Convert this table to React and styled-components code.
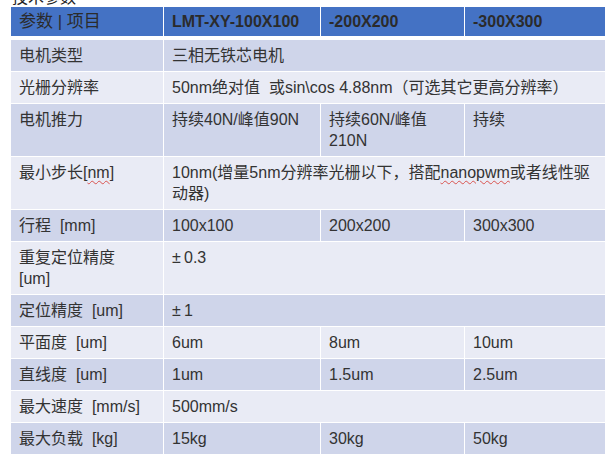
import React from "react";
import styled, { createGlobalStyle } from "styled-components";

const GlobalStyle = createGlobalStyle`
  body {
    margin: 0;
    background: #fff;
    font-family: "Liberation Sans", "Noto Sans CJK SC", sans-serif;
  }
`;

const Page = styled.div`
  padding: 0 5px 0 10px;
`;

const Caption = styled.div`
  height: 6px;
  overflow: hidden;
  display: flex;
  align-items: flex-end;
  padding-left: 2px;
  font-size: 16px;
  line-height: 17px;
  color: #222;
`;

const SpecTable = styled.table`
  width: 596px;
  border-collapse: collapse;
  table-layout: fixed;
  font-size: 16px;
  color: #333;
`;

const HeadCell = styled.th`
  background: #4472c4;
  color: #2b2b2b;
  font-weight: ${(p) => (p.$plain ? 400 : 700)};
  font-size: ${(p) => (p.$plain ? "17px" : "16px")};
  text-align: left;
  padding: 4px 8px 4px;
  line-height: 21px;
  border: 1px solid #fff;
  border-bottom: 4px solid #fff;
`;

const Row = styled.tr`
  background: ${(p) => (p.$dark ? "#cfd5ea" : "#e9ebf5")};
`;

const Cell = styled.td`
  padding: 5px 8px 5px;
  line-height: 21px;
  vertical-align: top;
  border: 1px solid #fff;
`;

const Squiggle = styled.span`
  text-decoration: underline wavy #d9534f;
  text-decoration-thickness: 1px;
  text-underline-offset: 2px;
`;

const rows = [
  ["电机类型", ["三相无铁芯电机"]],
  ["光栅分辨率", ["50nm绝对值\u00a0 或sin\\cos 4.88nm（可选其它更高分辨率）"]],
  ["电机推力", ["持续40N/峰值90N", "持续60N/峰值210N", "持续"]],
  [
    <>
      最小步长[<Squiggle>nm</Squiggle>]
    </>,
    [
      <>
        10nm(增量5nm分辨率光栅以下，搭配<Squiggle>nanopwm</Squiggle>或者线性驱动器)
      </>,
    ],
  ],
  ["行程\u00a0 [mm]", ["100x100", "200x200", "300x300"]],
  [
    <>
      重复定位精度
      <br />
      [um]
    </>,
    ["±\u20090.3"],
  ],
  ["定位精度\u00a0 [um]", ["±\u20091"]],
  ["平面度\u00a0 [um]", ["6um", "8um", "10um"]],
  ["直线度\u00a0 [um]", ["1um", "1.5um", "2.5um"]],
  ["最大速度\u00a0 [mm/s]", ["500mm/s"]],
  ["最大负载\u00a0 [kg]", ["15kg", "30kg", "50kg"]],
];

export default function App() {
  return (
    <Page>
      <GlobalStyle />
      <Caption>技术参数</Caption>
      <SpecTable>
        <colgroup>
          <col style={{ width: 153 }} />
          <col style={{ width: 157 }} />
          <col style={{ width: 144 }} />
          <col />
        </colgroup>
        <thead>
          <tr>
            <HeadCell $plain>参数 | 项目</HeadCell>
            <HeadCell>LMT-XY-100X100</HeadCell>
            <HeadCell>-200X200</HeadCell>
            <HeadCell>-300X300</HeadCell>
          </tr>
        </thead>
        <tbody>
          {rows.map(([label, values], i) => (
            <Row key={i} $dark={i % 2 === 0}>
              <Cell>{label}</Cell>
              {values.length === 1 ? (
                <Cell colSpan={3}>{values[0]}</Cell>
              ) : (
                values.map((v, j) => <Cell key={j}>{v}</Cell>)
              )}
            </Row>
          ))}
        </tbody>
      </SpecTable>
    </Page>
  );
}
